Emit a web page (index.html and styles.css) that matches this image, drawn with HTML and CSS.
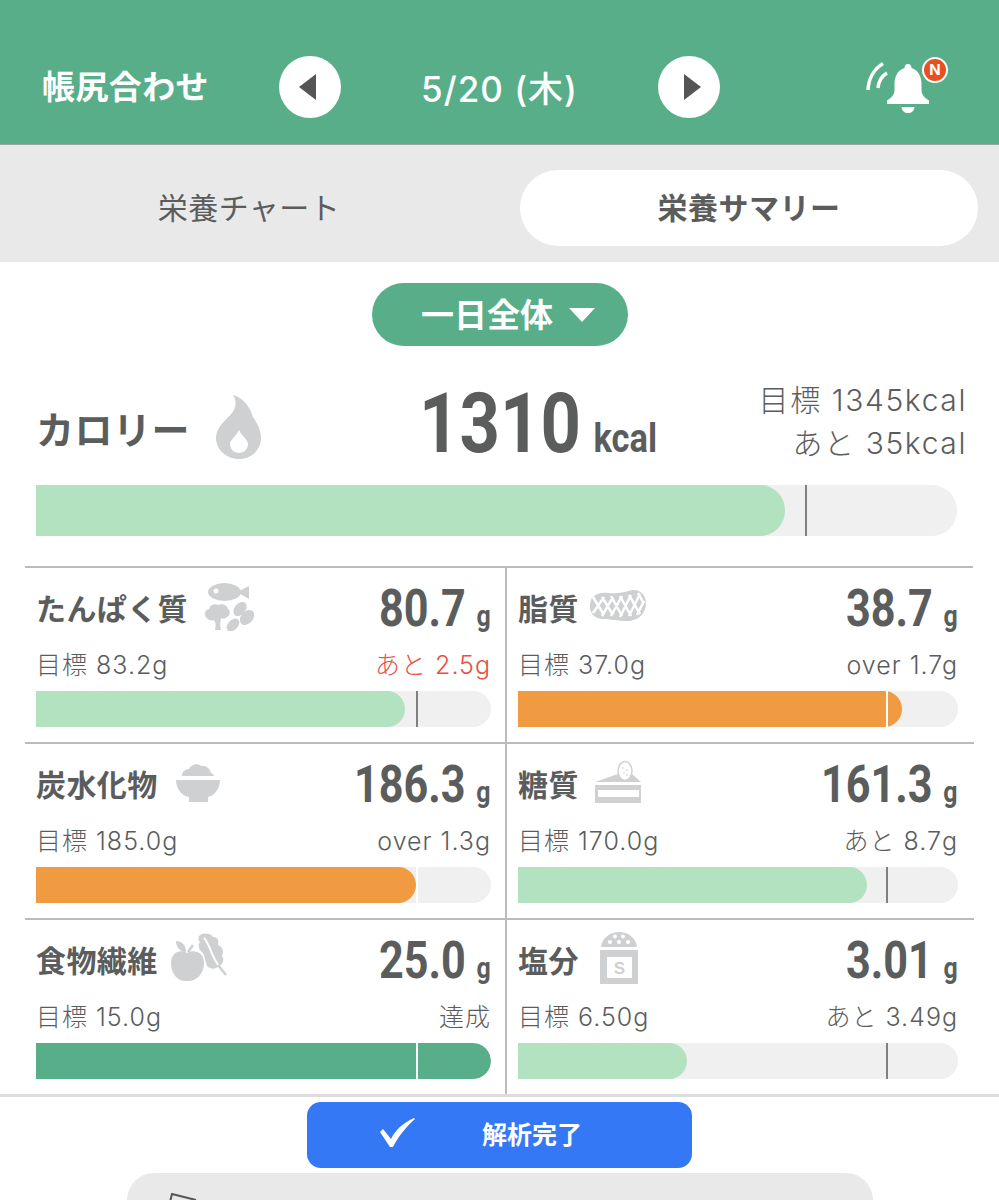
FILE: index.html
```html
<!DOCTYPE html>
<html lang="ja">
<head>
  <meta charset="UTF-8">
  <meta name="viewport" content="width=device-width, initial-scale=1.0">
  <title>栄養サマリー</title>
  <link rel="stylesheet" href="styles.css">
</head>
<body>
  <header class="topbar">
    <div class="topbar-title">帳尻合わせ</div>
    <button class="nav-btn nav-prev" type="button" aria-label="前日">
      <svg viewBox="0 0 17 26" width="17" height="26"><path d="M17 0V26L0 13Z"/></svg>
    </button>
    <div class="topbar-date">5/20 (木)</div>
    <button class="nav-btn nav-next" type="button" aria-label="翌日">
      <svg viewBox="0 0 17 26" width="17" height="26"><path d="M0 0V26L17 13Z"/></svg>
    </button>
    <div class="bell">
      <svg viewBox="0 0 72 60" width="72" height="60">
        <path class="bell-wave" d="M8 33C8.500 22 14 12 23 6.500"/>
        <path class="bell-wave" d="M18 31C18.500 25 22 19 27 16"/>
        <path class="bell-body" d="M48 7C45.500 7 44.500 9 44.500 11C38 13 34.500 19 34.500 27V33C34.500 38 31 41 27 43.500V47H69V43.500C65 41 61.500 38 61.500 33V27C61.500 19 58 13 51.500 11C51.500 9 50.500 7 48 7Z"/>
        <path class="bell-body" d="M41.500 50H54.500C54 54 51.500 56 48 56C44.500 56 42 54 41.500 50Z"/>
      </svg>
      <span class="bell-badge">N</span>
    </div>
  </header>

  <nav class="tabs">
    <div class="tab">栄養チャート</div>
    <div class="tab tab-active">栄養サマリー</div>
  </nav>

  <div class="range">
    <button class="range-btn" type="button">一日全体<span class="range-caret"></span></button>
  </div>

  <section class="calorie">
    <div class="calorie-head">
      <div class="calorie-title">
        カロリー
        <svg class="calorie-icon" viewBox="0 0 48 66" width="48" height="66">
          <path class="ic" d="M18 1C30 4 36 16 38 23C43 30 46 37 46 44C46 56 36 65 24 65C12 65 1 56 1 44C1 33 11 26 17 19C21 14 22 7 18 1Z"/>
          <path class="ic-w" d="M24 36C27 42 33 46 33 50C33 55 29 59 24 59C19 59 15 55 15 50C15 46 21 42 24 36Z"/>
        </svg>
      </div>
      <div class="calorie-value">1310<span class="calorie-unit">kcal</span></div>
      <div class="calorie-goal">目標 1345kcal<br>あと 35kcal</div>
    </div>
    <div class="bar bar-lg">
      <div class="bar-fill fill-light" style="width: 81.3%"></div>
      <div class="bar-mark" style="left: 83.5%"></div>
    </div>
  </section>

  <section class="nutrients">
    <div class="cell">
      <div class="cell-head">
        <div class="cell-name">たんぱく質
          <svg class="cell-icon" viewBox="0 0 50 50" width="50" height="50">
            <ellipse class="ic" cx="20.500" cy="11" rx="16.500" ry="9"/>
            <path class="ic" d="M33 11L45 5V18Z"/>
            <circle class="ic-w" cx="12" cy="10" r="2.500"/>
            <path class="ic" d="M11 49C12 45 12 42 10 39C6 40 2 38 1 34C0 31 3 28 5 28C6 24 11 22 14 24C18 22 23 24 24 28C27 30 26 35 23 36C21 38 19 38 17 37C16 41 16 45 17 49Z"/>
            <ellipse class="ic" cx="36" cy="28" rx="8" ry="5.500" transform="rotate(-50 36 28)"/>
            <ellipse class="ic" cx="43" cy="36.500" rx="8.500" ry="6" transform="rotate(-50 43 36.500)"/>
            <ellipse class="ic" cx="29" cy="44" rx="7.500" ry="5" transform="rotate(-45 29 44)"/>
          </svg>
        </div>
        <div class="cell-value">80.7<span class="cell-unit">g</span></div>
      </div>
      <div class="cell-goal"><span>目標 83.2g</span><span class="short">あと 2.5g</span></div>
      <div class="bar">
        <div class="bar-fill fill-light" style="width: 81.1%"></div>
        <div class="bar-mark" style="left: 83.5%"></div>
      </div>
    </div>

    <div class="cell cell-right">
      <div class="cell-head">
        <div class="cell-name">脂質
          <svg class="cell-icon icon-fat" viewBox="0 0 58 34" width="58" height="34">
            <path class="ic" d="M1 15C2 6 10 3 19 4C29 5 36 3 43 1C51 0 57 6 57 14C57 24 50 32 38 32C28 32 22 30 14 30C6 30 0 24 1 15Z"/>
            <path class="fat-net" d="M4 8L15 26M13 8L24 26M22 7L33 27M31 7L42 27M40 6L51 25M49 4L54 13M15 8L4 24M24 8L13 27M33 7L22 27M42 6L31 28M51 5L40 27M55 12L48 26"/>
          </svg>
        </div>
        <div class="cell-value">38.7<span class="cell-unit">g</span></div>
      </div>
      <div class="cell-goal"><span>目標 37.0g</span><span>over 1.7g</span></div>
      <div class="bar">
        <div class="bar-fill fill-over" style="width: 87.2%"></div>
        <div class="bar-mark mark-white" style="left: 83.6%"></div>
      </div>
    </div>

    <div class="cell">
      <div class="cell-head">
        <div class="cell-name">炭水化物
          <svg class="cell-icon icon-rice" viewBox="0 0 44 41" width="44" height="41">
            <path class="ic" d="M6 14C6 9 10 7 13 7C15 2 22 1 25 4C30 3 34 7 35 11C37 12 38 13 38 14Z"/>
            <path class="ic" d="M0 18H44C44 27 38 34 32 35V40H13V35C6 34 0 27 0 18Z"/>
          </svg>
        </div>
        <div class="cell-value">186.3<span class="cell-unit">g</span></div>
      </div>
      <div class="cell-goal"><span>目標 185.0g</span><span>over 1.3g</span></div>
      <div class="bar">
        <div class="bar-fill fill-over" style="width: 83.5%"></div>
        <div class="bar-mark mark-white" style="left: 83.5%"></div>
      </div>
    </div>

    <div class="cell cell-right">
      <div class="cell-head">
        <div class="cell-name">糖質
          <svg class="cell-icon icon-cake" viewBox="0 0 48 46" width="48" height="46">
            <path class="ic" d="M1 23L24 15H38L47 23Z"/>
            <ellipse class="egg" cx="31" cy="12" rx="7" ry="9.500"/>
            <circle class="ic" cx="29" cy="9" r="0.800"/><circle class="ic" cx="33" cy="11" r="0.800"/>
            <circle class="ic" cx="30" cy="14" r="0.800"/><circle class="ic" cx="33" cy="16" r="0.800"/>
            <path class="ic" d="M1 26H47V44H1Z"/>
            <path class="ic-w" d="M4 31H45V38H4Z"/>
          </svg>
        </div>
        <div class="cell-value">161.3<span class="cell-unit">g</span></div>
      </div>
      <div class="cell-goal"><span>目標 170.0g</span><span>あと 8.7g</span></div>
      <div class="bar">
        <div class="bar-fill fill-light" style="width: 79.3%"></div>
        <div class="bar-mark" style="left: 83.6%"></div>
      </div>
    </div>

    <div class="cell cell-last">
      <div class="cell-head">
        <div class="cell-name">食物繊維
          <svg class="cell-icon icon-fiber" viewBox="0 0 60 52" width="60" height="52">
            <path class="ic" d="M18 21C24 17 35 19 35 31C35 42 27 49 20 49H16C9 49 2 42 2 31C2 19 13 17 18 21Z"/>
            <path class="ic" d="M7 9C13 9 17 13 17 20C11 20 7 15 7 9Z"/>
            <path class="ic-line" d="M19 20L24 13"/>
            <path class="ic" d="M30 4C34 0 42 1 44 5C49 5 50 9 49 13C54 15 55 20 53 24C56 28 53 33 50 34C46 38 41 37 38 34C36 28 36 24 33 20C29 17 29 12 31 10C29 8 29 6 30 4Z"/>
            <path class="ic-vein" d="M35 6C41 12 42 24 50 34"/>
            <path class="ic-line" d="M49 33L57 43"/>
          </svg>
        </div>
        <div class="cell-value">25.0<span class="cell-unit">g</span></div>
      </div>
      <div class="cell-goal"><span>目標 15.0g</span><span>達成</span></div>
      <div class="bar">
        <div class="bar-fill fill-done" style="width: 100%"></div>
        <div class="bar-mark mark-white" style="left: 83.5%"></div>
      </div>
    </div>

    <div class="cell cell-right cell-last">
      <div class="cell-head">
        <div class="cell-name">塩分
          <svg class="cell-icon icon-salt" viewBox="0 0 38 52" width="38" height="52">
            <path class="ic" d="M1 15C2 6 10 0 19 0C28 0 36 6 37 15Z"/>
            <circle class="ic-w" cx="15" cy="4.500" r="2"/><circle class="ic-w" cx="23" cy="4.500" r="2"/>
            <circle class="ic-w" cx="10" cy="10" r="2"/><circle class="ic-w" cx="19" cy="10" r="2"/><circle class="ic-w" cx="28" cy="10" r="2"/>
            <path class="ic" d="M0 18H38V52H0Z"/>
            <path class="ic-w" d="M7 25H32V46H7Z"/>
            <text class="salt-s" x="19.500" y="42" text-anchor="middle">S</text>
          </svg>
        </div>
        <div class="cell-value">3.01<span class="cell-unit">g</span></div>
      </div>
      <div class="cell-goal"><span>目標 6.50g</span><span>あと 3.49g</span></div>
      <div class="bar">
        <div class="bar-fill fill-light" style="width: 38.5%"></div>
        <div class="bar-mark" style="left: 83.6%"></div>
      </div>
    </div>
  </section>

  <footer class="actions">
    <button class="done-btn" type="button">
      <svg class="done-check" viewBox="0 0 36 30" width="36" height="30"><path d="M0 14L3 11L11 21C15 13 21 6 34 0L35 1C26 9 18 19 13 29H10Z"/></svg>
      <span>解析完了</span>
    </button>
    <div class="sheet">
      <svg viewBox="0 0 58 10" width="58" height="10"><path class="sheet-icon" d="M1 9H57M4 9L6 1L30 7"/></svg>
    </div>
  </footer>
</body>
</html>
```

FILE: styles.css
```css
* {
  box-sizing: border-box;
}
html, body {
  margin: 0;
  padding: 0;
}
html {
  height: 1200px;
  overflow: hidden;
}
body {
  width: 999px;
  height: 1200px;
  overflow: hidden;
  background-color: white;
  color: #5b5d5d;
  font-family: Inter, 'Noto Sans CJK JP', sans-serif;
  font-weight: 300;
}
button {
  border: none;
  padding: 0;
  font-family: inherit;
  cursor: pointer;
}

/* top bar */
.topbar {
  display: flex;
  align-items: center;
  height: 145px;
  padding: 30px 0 1px 42px;
  background-color: #58ae88;
  border-bottom: 1px solid #98a8a0;
  color: white;
}
.topbar-title {
  width: 237px;
  padding-bottom: 4px;
  font-family: 'Noto Sans CJK JP', sans-serif;
  font-size: 33px;
  font-weight: 700;
  letter-spacing: 0.4px;
}
.nav-btn {
  display: flex;
  align-items: center;
  justify-content: center;
  width: 62px;
  height: 62px;
  border-radius: 50%;
  background-color: white;
}
.nav-btn path {
  fill: #555;
}
.nav-prev {
  padding-right: 6px;
}
.nav-next {
  padding-left: 6px;
}
.topbar-date {
  width: 317px;
  text-align: center;
  font-size: 35px;
  font-weight: 500;
  letter-spacing: 1px;
}
.bell {
  position: relative;
  width: 72px;
  height: 60px;
  margin-left: 140px;
}
.bell svg {
  display: block;
}
.bell-wave {
  fill: none;
  stroke: white;
  stroke-width: 3.500;
}
.bell-body {
  fill: white;
}
.bell-badge {
  position: absolute;
  left: 62px;
  top: 0;
  width: 26px;
  height: 26px;
  border: 2px solid white;
  border-radius: 50%;
  background-color: #e9501f;
  font-size: 15px;
  font-weight: 700;
  line-height: 22px;
  text-align: center;
}

/* tabs */
.tabs {
  display: grid;
  grid-template-columns: 458px 458px;
  column-gap: 42px;
  height: 117px;
  padding: 25px 21px 16px 20px;
  background-color: #e9e9e9;
}
.tab {
  display: flex;
  align-items: center;
  justify-content: center;
  padding-bottom: 4px;
  border-radius: 38px;
  font-family: 'Noto Sans CJK JP', sans-serif;
  font-size: 30px;
  font-weight: 400;
  letter-spacing: 0.5px;
}
.tab-active {
  background-color: white;
  font-weight: 700;
}

/* range dropdown */
.range {
  display: flex;
  justify-content: center;
  padding-top: 21px;
}
.range-btn {
  display: flex;
  align-items: center;
  justify-content: center;
  gap: 16px;
  width: 256px;
  height: 63px;
  padding: 0 0 3px 17px;
  border-radius: 32px;
  background-color: #58ae88;
  color: white;
  font-family: 'Noto Sans CJK JP', sans-serif;
  font-size: 33px;
  font-weight: 700;
}
.range-caret {
  width: 0;
  height: 0;
  margin-top: 3px;
  border-left: 13px solid transparent;
  border-right: 13px solid transparent;
  border-top: 14px solid white;
}

/* calorie summary */
.calorie {
  padding: 33px 32px 0 36px;
}
.calorie-head {
  display: grid;
  grid-template-columns: 383px 1fr auto;
  grid-template-rows: 86px;
  height: 86px;
}
.calorie-title {
  display: flex;
  align-items: center;
  gap: 25px;
  padding-top: 10px;
  font-family: 'Noto Sans CJK JP', sans-serif;
  font-size: 38px;
  font-weight: 700;
  letter-spacing: 0.5px;
}
.calorie-icon {
  flex: none;
}
/* no condensed face installed, so the bold numerals get squeezed */
.calorie-value {
  font-family: Roboto, sans-serif;
  font-size: 84px;
  font-weight: 700;
  line-height: 90px;
  white-space: nowrap;
  transform: scaleX(0.84);
  transform-origin: left center;
}
.calorie-unit {
  margin-left: 15px;
  font-size: 41px;
}
.calorie-goal {
  font-size: 30px;
  line-height: 43px;
  letter-spacing: 1.6px;
  text-align: right;
}
.bar {
  position: relative;
  height: 36px;
  border-radius: 0 18px 18px 0;
  background-color: #f0f0f0;
  overflow: hidden;
}
.bar-lg {
  height: 51px;
  margin: 20px 10px 0 0;
  border-radius: 0 25px 25px 0;
}
.bar-fill {
  height: 100%;
  border-radius: 0 18px 18px 0;
}
.bar-lg .bar-fill {
  border-radius: 0 25px 25px 0;
}
.fill-light {
  background-color: #b3e2c0;
}
.fill-over {
  background-color: #f09a42;
}
.fill-done {
  background-color: #58ae88;
}
.bar-mark {
  position: absolute;
  top: 0;
  bottom: 0;
  width: 2px;
  background-color: #808080;
}
.mark-white {
  background-color: white;
}

/* nutrient grid */
.nutrients {
  display: grid;
  grid-template-columns: 482px 467px;
  margin: 30px 26px 0 25px;
  border-top: 2px solid #bbb;
}
.cell {
  height: 176px;
  padding: 15px 14px 0 11px;
  border-right: 2px solid #bbb;
  border-bottom: 2px solid #bbb;
}
.cell-right {
  padding: 15px 16px 0 11px;
  border-right: none;
}
.cell-last {
  height: 174px;
  border-bottom: none;
}
.cell-head {
  display: flex;
  align-items: center;
  justify-content: space-between;
  height: 48px;
}
.cell-name {
  display: flex;
  align-items: center;
  gap: 16px;
  font-family: 'Noto Sans CJK JP', sans-serif;
  font-size: 30px;
  font-weight: 700;
  letter-spacing: 0.4px;
}
.cell-icon {
  flex: none;
  margin-top: -2px;
}
.icon-fat {
  margin-left: -6px;
}
.icon-rice {
  margin-left: 2px;
}
.icon-cake {
  margin-left: -1px;
}
.icon-fiber {
  margin-left: -5px;
}
.icon-salt {
  margin-left: 5px;
}
.cell-value {
  padding-top: 2px;
  font-family: Roboto, sans-serif;
  font-size: 52px;
  font-weight: 700;
  white-space: nowrap;
  transform: scaleX(0.83);
  transform-origin: right center;
}
.cell-unit {
  margin-left: 13px;
  font-size: 30px;
}
.cell-goal {
  display: flex;
  justify-content: space-between;
  height: 30px;
  margin: 19px 0 11px;
  font-size: 25px;
  line-height: 30px;
  letter-spacing: 1px;
}
.short {
  color: #e8503f;
}

/* ic-* are the grey food pictograms */
.ic {
  fill: #cfd0d1;
}
.ic-w {
  fill: white;
}
.ic-line {
  fill: none;
  stroke: #cfd0d1;
  stroke-width: 2.500;
}
.ic-vein {
  fill: none;
  stroke: white;
  stroke-width: 2;
}
.fat-net {
  fill: none;
  stroke: white;
  stroke-width: 2.500;
}
.egg {
  fill: white;
  stroke: #cfd0d1;
  stroke-width: 1.500;
}
.salt-s {
  fill: #cfd0d1;
  font-family: 'Liberation Sans', sans-serif;
  font-size: 17px;
}

/* bottom actions */
.actions {
  border-top: 3px solid #ddd;
}
.done-btn {
  display: flex;
  align-items: center;
  width: 385px;
  height: 66px;
  margin: 5px auto;
  padding: 0 0 4px 73px;
  border-radius: 14px;
  background-color: #3578f6;
  color: white;
  font-family: 'Noto Sans CJK JP', sans-serif;
  font-size: 25px;
  font-weight: 700;
}
.done-check {
  margin-right: 66px;
}
.done-check path {
  fill: white;
}
.sheet {
  width: 746px;
  height: 27px;
  margin-left: 127px;
  padding: 20px 0 0 39px;
  border-radius: 45px 45px 0 0;
  background-color: #e9e9e9;
}
.sheet svg {
  display: block;
}
.sheet-icon {
  fill: none;
  stroke: #555;
  stroke-width: 2;
}
```
